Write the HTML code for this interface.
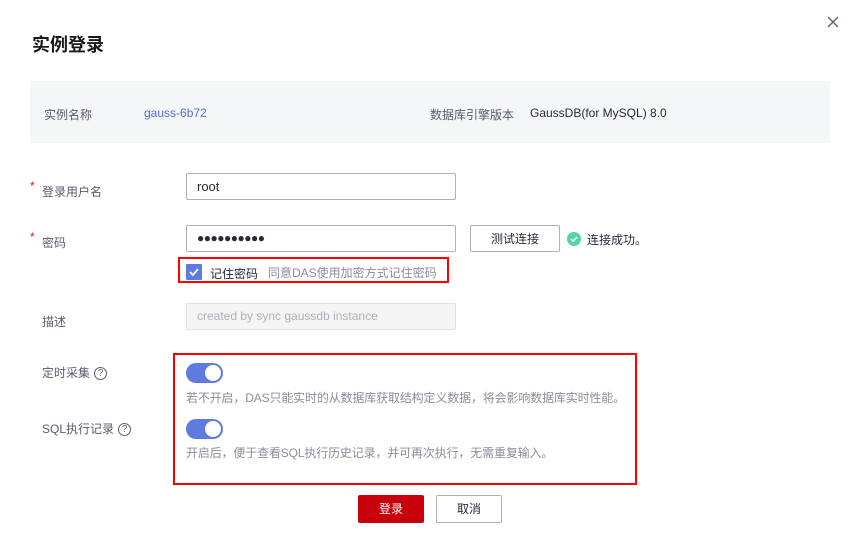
<!DOCTYPE html>
<html><head><meta charset="utf-8"><style>
*{box-sizing:border-box;margin:0;padding:0}
body{width:860px;height:555px;background:#fff;font-family:"Liberation Sans","Noto Sans CJK SC",sans-serif;font-size:12px;color:#252b3a;position:relative;overflow:hidden}
.a{position:absolute;white-space:nowrap}
.inp{position:absolute;border:1px solid #adb0b8;border-radius:2px;height:27px;width:270px;padding-left:10px;line-height:25px;font-size:13px}
.tg{position:absolute;width:37px;height:20px;border-radius:10px;background:#5e7ce0}
.tg::after{content:"";position:absolute;right:2px;top:2px;width:16px;height:16px;border-radius:50%;background:#fff}
.q{display:inline-block;width:13px;height:13px;border:1px solid #575d6c;border-radius:50%;font-size:10px;line-height:11px;text-align:center;margin-left:4px;vertical-align:1px}
.gray{color:#8a8e99}
.star{color:#e8191c}
</style></head><body>
<div class="a" style="left:32px;top:31px;font-size:18px;font-weight:bold;color:#191919">实例登录</div>
<svg class="a" style="left:827px;top:16px" width="12" height="12"><path d="M1 1L11 11M11 1L1 11" stroke="#575d6c" stroke-width="1.3"/></svg>
<div class="a" style="left:30px;top:81px;width:800px;height:62px;background:#f5f6f8"></div>
<div class="a" style="left:44px;top:106px;color:#575d6c">实例名称</div>
<div class="a" style="left:144px;top:106px;color:#526ecc">gauss-6b72</div>
<div class="a" style="left:430px;top:106px;color:#575d6c">数据库引擎版本</div>
<div class="a" style="left:530px;top:106px">GaussDB(for MySQL) 8.0</div>

<div class="a star" style="left:30px;top:179px">*</div>
<div class="a" style="left:42px;top:183px;color:#575d6c">登录用户名</div>
<div class="inp" style="left:186px;top:173px">root</div>

<div class="a star" style="left:30px;top:230px">*</div>
<div class="a" style="left:42px;top:234px;color:#575d6c">密码</div>
<div class="inp" style="left:186px;top:225px;font-size:12px;letter-spacing:-0.5px;line-height:25px">●●●●●●●●●●</div>
<div class="a" style="left:470px;top:225px;width:90px;height:27px;border:1px solid #adb0b8;border-radius:2px;text-align:center;line-height:27px">测试连接</div>
<svg class="a" style="left:567px;top:232px" width="14" height="14"><circle cx="7" cy="7" r="7" fill="#50d4ab"/><path d="M4 7l2.2 2.2L10.2 5" stroke="#fff" stroke-width="1.5" fill="none"/></svg>
<div class="a" style="left:587px;top:231px">连接成功。</div>

<div class="a" style="left:178px;top:257px;width:271px;height:26px;border:2px solid #f00"></div>
<svg class="a" style="left:186px;top:264px" width="16" height="16"><rect width="16" height="16" rx="1" fill="#5e7ce0"/><path d="M4 8l3 3 5-6" stroke="#fff" stroke-width="1.8" fill="none"/></svg>
<div class="a" style="left:210px;top:265px">记住密码</div>
<div class="a gray" style="left:268px;top:264px">同意DAS使用加密方式记住密码</div>

<div class="a" style="left:42px;top:313px;color:#575d6c">描述</div>
<div class="inp" style="left:186px;top:303px;background:#f5f5f6;border-color:#dfe1e6;color:#adb0b8;font-size:12px">created by sync gaussdb instance</div>

<div class="a" style="left:173px;top:353px;width:464px;height:132px;border:2px solid #f00"></div>
<div class="a" style="left:42px;top:364px;color:#575d6c">定时采集<span class="q">?</span></div>
<div class="tg" style="left:186px;top:363px"></div>
<div class="a gray" style="left:186px;top:389px;letter-spacing:-0.15px">若不开启，DAS只能实时的从数据库获取结构定义数据，将会影响数据库实时性能。</div>
<div class="a" style="left:42px;top:420px;color:#575d6c">SQL执行记录<span class="q">?</span></div>
<div class="tg" style="left:186px;top:419px"></div>
<div class="a gray" style="left:186px;top:444px;letter-spacing:-0.15px">开启后，便于查看SQL执行历史记录，并可再次执行，无需重复输入。</div>

<div class="a" style="left:358px;top:495px;width:66px;height:28px;background:#c7000b;color:#fff;text-align:center;line-height:28px;border-radius:2px">登录</div>
<div class="a" style="left:436px;top:495px;width:66px;height:28px;border:1px solid #adb0b8;text-align:center;line-height:26px;border-radius:2px">取消</div>
</body></html>
